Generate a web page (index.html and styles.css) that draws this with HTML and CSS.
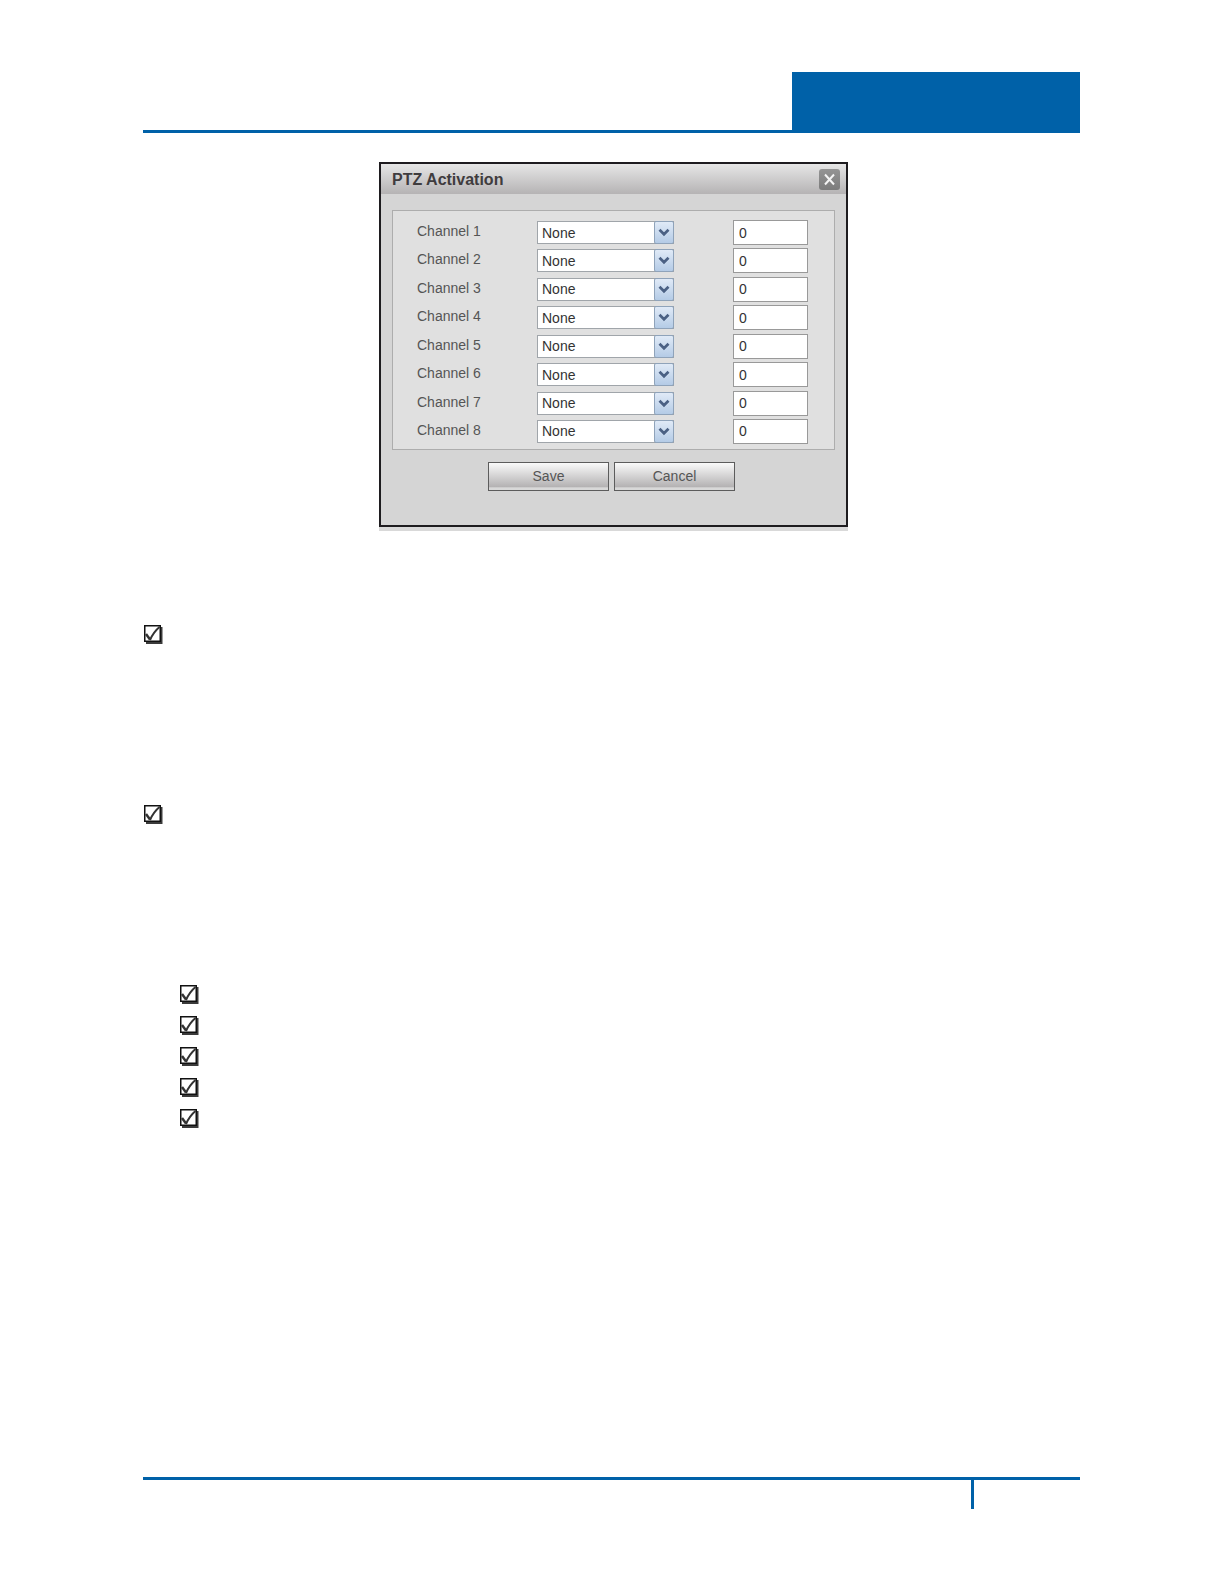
FILE: index.html
```html
<!DOCTYPE html>
<html lang="en">
<head>
<meta charset="utf-8">
<title>PTZ Activation</title>
<link rel="stylesheet" href="styles.css">
</head>
<body>
<svg class="defs" aria-hidden="true">
  <symbol id="tick" viewBox="0 0 20 20">
    <path d="M2 2h16.500v17H2z" fill="#3a3a3a"/>
    <path d="M.75.75h15.500v15.500H.75z" fill="#fff" stroke="#111" stroke-width="1.500"/>
    <path d="M2 9l4 5.500" fill="none" stroke="#333" stroke-width="2.500"/>
    <path d="M6 15Q9.500 7 15.500 2" fill="none" stroke="#333" stroke-width="2"/>
  </symbol>
  <symbol id="chevron" viewBox="0 0 20 23">
    <path d="M5 8.500l5 5 5-5" fill="none" stroke="#4b6184" stroke-width="3"/>
  </symbol>
</svg>
<div class="page">
  <header class="header"><div class="header-block"></div></header>
  <main class="content">
    <div class="figure">
    <form class="dialog">
      <div class="titlebar">
        <h1 class="title">PTZ Activation</h1>
        <button class="close" type="button" aria-label="Close">
          <svg viewBox="0 0 21 21" width="21" height="21"><path d="M6 5.500l9 10M15 5.500l-9 10" stroke="#f4f4f4" stroke-width="2"/></svg>
        </button>
      </div>
      <div class="channels">
        <div class="row"><label class="label" for="c1">Channel 1</label><span class="picker"><select class="select" id="c1"><option>None</option></select><svg class="arrow" viewBox="0 0 20 23"><use href="#chevron"/></svg></span><input class="number" type="text" value="0" aria-label="Channel 1 address"></div>
        <div class="row"><label class="label" for="c2">Channel 2</label><span class="picker"><select class="select" id="c2"><option>None</option></select><svg class="arrow" viewBox="0 0 20 23"><use href="#chevron"/></svg></span><input class="number" type="text" value="0" aria-label="Channel 2 address"></div>
        <div class="row"><label class="label" for="c3">Channel 3</label><span class="picker"><select class="select" id="c3"><option>None</option></select><svg class="arrow" viewBox="0 0 20 23"><use href="#chevron"/></svg></span><input class="number" type="text" value="0" aria-label="Channel 3 address"></div>
        <div class="row"><label class="label" for="c4">Channel 4</label><span class="picker"><select class="select" id="c4"><option>None</option></select><svg class="arrow" viewBox="0 0 20 23"><use href="#chevron"/></svg></span><input class="number" type="text" value="0" aria-label="Channel 4 address"></div>
        <div class="row"><label class="label" for="c5">Channel 5</label><span class="picker"><select class="select" id="c5"><option>None</option></select><svg class="arrow" viewBox="0 0 20 23"><use href="#chevron"/></svg></span><input class="number" type="text" value="0" aria-label="Channel 5 address"></div>
        <div class="row"><label class="label" for="c6">Channel 6</label><span class="picker"><select class="select" id="c6"><option>None</option></select><svg class="arrow" viewBox="0 0 20 23"><use href="#chevron"/></svg></span><input class="number" type="text" value="0" aria-label="Channel 6 address"></div>
        <div class="row"><label class="label" for="c7">Channel 7</label><span class="picker"><select class="select" id="c7"><option>None</option></select><svg class="arrow" viewBox="0 0 20 23"><use href="#chevron"/></svg></span><input class="number" type="text" value="0" aria-label="Channel 7 address"></div>
        <div class="row"><label class="label" for="c8">Channel 8</label><span class="picker"><select class="select" id="c8"><option>None</option></select><svg class="arrow" viewBox="0 0 20 23"><use href="#chevron"/></svg></span><input class="number" type="text" value="0" aria-label="Channel 8 address"></div>
      </div>
      <div class="actions">
        <button class="button" type="button">Save</button>
        <button class="button" type="button">Cancel</button>
      </div>
    </form>
    </div>
    <ul class="notes">
      <li class="note"><svg class="tick"><use href="#tick"/></svg></li>
      <li class="note"><svg class="tick"><use href="#tick"/></svg></li>
    </ul>
    <ul class="steps">
      <li class="step"><svg class="tick"><use href="#tick"/></svg></li>
      <li class="step"><svg class="tick"><use href="#tick"/></svg></li>
      <li class="step"><svg class="tick"><use href="#tick"/></svg></li>
      <li class="step"><svg class="tick"><use href="#tick"/></svg></li>
      <li class="step"><svg class="tick"><use href="#tick"/></svg></li>
    </ul>
  </main>
  <footer class="footer"><div class="folio"></div></footer>
</div>
</body>
</html>
```

FILE: styles.css
```css
* {
  box-sizing: border-box;
}

body {
  margin: 0;
  background: #fff;
  font: 14px/20px "Liberation Sans", Arial, sans-serif;
  color: #555;
}

.defs {
  display: none;
}

.page {
  display: flex;
  flex-direction: column;
  min-height: 100vh;
  padding: 72px 144px 75px 143px;
}

.header {
  display: flex;
  justify-content: flex-end;
  border-bottom: 3px solid #0061a8;
}

.header-block {
  width: 288px;
  height: 58px;
  background: #0061a8;
}

.content {
  flex: 1;
}

.figure {
  display: flex;
  justify-content: center;
  padding: 29px 0 0 4px;
}

.dialog {
  width: 469px;
  padding-bottom: 34px;
  border: 2px solid #1e1c1f;
  background: #d5d5d5;
  box-shadow: 0 4px 0 #d9d9d9;
}

.titlebar {
  display: flex;
  align-items: center;
  justify-content: space-between;
  height: 30px;
  padding: 0 6px 0 11px;
  background: linear-gradient(#e6e6e6, #b5b3b4);
}

.title {
  margin: 0;
  padding-top: 1px;
  font-size: 16px;
  line-height: 20px;
  font-weight: bold;
  color: #3f3c3e;
}

.close {
  display: flex;
  width: 21px;
  height: 21px;
  padding: 0;
  border: 0;
  border-radius: 3px;
  background: linear-gradient(#949494, #7c7c7c);
}

.channels {
  display: flex;
  flex-direction: column;
  justify-content: space-between;
  min-height: 240px;
  margin: 16px 11px 0;
  padding: 9px 26px 5px 24px;
  border: 1px solid #adadad;
  background: #e0e0e0;
}

.row {
  display: grid;
  grid-template-columns: 120px 137px 1fr;
  align-items: center;
}

.label {
  padding-bottom: 3px;
}

.number {
  justify-self: end;
  width: 75px;
  height: 25px;
  padding: 0 5px;
  border: 1px solid #999;
  background: #fff;
  font: inherit;
  color: #333;
}

.picker {
  display: grid;
}

.select {
  grid-area: 1 / 1;
  height: 23px;
  padding: 0 4px;
  border: 1px solid #a0a5aa;
  border-radius: 0;
  appearance: none;
  background: #fff;
  font: inherit;
  color: #333;
}

.arrow {
  grid-area: 1 / 1;
  justify-self: end;
  width: 20px;
  height: 23px;
  border: 1px solid #8fa3ba;
  border-radius: 2px;
  background: linear-gradient(#e0eaf7, #b4cbe6);
  pointer-events: none;
}

.actions {
  display: flex;
  justify-content: center;
  gap: 5px;
  padding: 12px 4px 0 0;
}

.button {
  width: 121px;
  height: 29px;
  padding: 0 0 1px;
  border: 1px solid #5c5c5c;
  background: linear-gradient(#fafafa, #b4b2b3 88%, #d8d8d8 92%);
  font: inherit;
  color: #555;
}

.notes,
.steps {
  margin: 0;
  padding: 0;
  list-style: none;
}

.notes {
  padding: 98px 0 0 1px;
}

.note {
  height: 180px;
}

.steps {
  padding-left: 37px;
}

.step {
  height: 31px;
}

.tick {
  display: block;
  width: 20px;
  height: 20px;
}

.footer {
  display: flex;
  justify-content: flex-end;
  border-top: 3px solid #0061a8;
}

.folio {
  width: 109px;
  height: 29px;
  border-left: 3px solid #0061a8;
}
```
